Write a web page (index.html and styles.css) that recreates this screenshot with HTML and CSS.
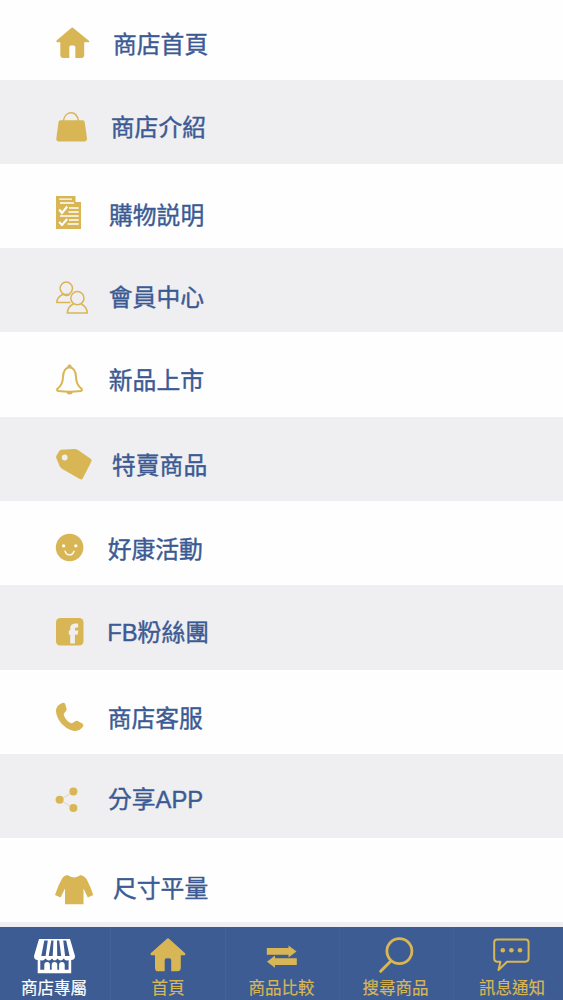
FILE: index.html
```html
<!DOCTYPE html>
<html lang="zh-Hant">
<head>
<meta charset="utf-8">
<title>商店專屬</title>
<link rel="stylesheet" href="styles.css">
</head>
<body>
<div class="app">
<ul class="menu">
<li class="row first"><svg class="icon i-home" viewBox="0 0 40 36"><path d="M18.3 1.5Q17.8 1.5 17 2.2L2.5 14.6Q1.8 15.9 3.1 16.2H6.3V28.5Q6.3 32 9.5 32H15.3V21Q15.3 19.5 16.8 19.5H19.8Q21.3 19.5 21.3 21V32H27.4Q30.2 32 30.2 29V16.2H34.5Q36.3 15.6 34.6 14.4L19.6 2.2Q18.9 1.5 18.3 1.5Z"/></svg><span class="label l-home">商店首頁</span></li>
<li class="row alt"><svg class="icon i-bag" viewBox="0 0 40 36"><path d="M6.4 10.3H28.8Q30.3 10.3 30.7 12L33 28.6Q33.2 31.4 30.5 31.4H4.8Q2 31.4 2.3 28.6L4.5 12Q4.8 10.3 6.4 10.3Z"/><path class="line" d="M9.3 11C11 0.5 22.5 -0.5 24.5 11"/></svg><span class="label l-bag">商店介紹</span></li>
<li class="row"><svg class="icon i-list" viewBox="0 0 40 36"><path d="M2 2H21.5V8H27V35H2Z"/><path class="cut" d="M5.2 5.2H18M6 9H20M15 14H24.7M14.5 18H24.7M6 22H24.7M15 26H24.7M13.5 30H24.7"/><path class="cut bold" d="M5.2 15.5L8 19L13.2 12.5M5.2 28L8 31L13.2 25"/></svg><span class="label l-list">購物説明</span></li>
<li class="row alt"><svg class="icon i-members" viewBox="0 0 40 36"><g class="line"><circle cx="12.3" cy="9.3" r="6.2"/><path d="M16 15.5C14 17 10.5 16.6 9 15.2C4.5 17.3 2.8 20 2.8 23.6H16.5"/><circle class="hole" cx="23.4" cy="19.2" r="6.6"/><path d="M19.4 25C15.5 26.7 13.6 29.7 13.3 34H33.3C33 29.8 31 26.7 27.3 25"/></g></svg><span class="label l-members">會員中心</span></li>
<li class="row"><svg class="icon i-bell" viewBox="0 0 40 36"><path class="line heavy" d="M15.5 4.2C10.6 4.7 9.2 8.8 9 14C8.8 20.5 7.1 23 3.7 25.5Q2 27.5 4.5 28Q15.5 29.4 26.5 28Q29 27.5 27.3 25.5C23.9 23 22.2 20.5 22 14C21.8 8.8 20.4 4.7 15.5 4.2Z"/><path d="M13.3 4.8Q13.2 1.5 15.5 1.5T17.7 4.8ZM12.3 28.5H18.9Q18.7 31.4 15.6 31.4T12.3 28.5Z"/></svg><span class="label l-bell">新品上市</span></li>
<li class="row alt"><svg class="icon i-tag" viewBox="0 0 40 36"><path d="M7.2 2.7L20.8 2Q22.4 2 24 3L36.6 11.7Q38.2 13 37.4 14.5L28.7 31.5Q27.7 33.1 25.8 32L8.3 21.9Q6.4 20.7 5.6 19L2.2 10.8Q1.7 9.5 2.7 8.2L5.1 4.2Q6 2.8 7.2 2.7Z"/><circle class="hole" cx="10.7" cy="10.5" r="2.9"/></svg><span class="label l-tag">特賣商品</span></li>
<li class="row"><svg class="icon i-smile" viewBox="0 0 40 36"><circle cx="15.6" cy="15.5" r="13.8"/><circle class="white" cx="9.6" cy="13.8" r="1.6"/><circle class="white" cx="21.8" cy="13.8" r="1.6"/><path class="cut" d="M10.9 18.7C12.2 24.2 18.6 24.4 20.2 18.7"/></svg><span class="label l-smile">好康活動</span></li>
<li class="row alt"><svg class="icon i-fb" viewBox="0 0 40 36"><rect x="2" y="2" width="27.5" height="27.6" rx="4.2"/><path class="hole" d="M16.2 27.5V18.7H14.8V14.6H16.2V12.5C16.2 9 18.5 7.2 24.2 7.7V11.5H22.2Q20.9 11.5 20.9 13V14.6H24.3L23.7 18.7H20.9V27.5Z"/></svg><span class="label l-fb">FB粉絲團</span></li>
<li class="row"><svg class="icon i-phone" viewBox="0 0 40 36"><path d="M8.2 2.1Q10.2 1.3 11.2 3.1L12.6 8Q13 9.7 10.7 11.6Q9.2 13 10 14.7C11.5 18.3 14.3 21.3 17.4 22.2Q18.5 22.5 19.7 21.2Q21.5 19.2 23.2 19.8L28.3 22.4Q30.1 23.5 29.2 25.3Q25.6 30.8 19.3 29.7C10.5 28 2.6 19 2 10.5Q1.8 4.5 8.2 2.1Z"/></svg><span class="label l-phone">商店客服</span></li>
<li class="row alt"><svg class="icon i-share" viewBox="0 0 40 36"><path class="line faint" d="M19.5 5.8L5.6 14L19.5 22"/><circle cx="19.4" cy="5.6" r="4"/><circle cx="5.6" cy="13.8" r="4"/><circle cx="19.4" cy="21.9" r="4"/></svg><span class="label l-share">分享APP</span></li>
<li class="row"><svg class="icon i-shirt" viewBox="0 0 40 36"><path d="M13.5 2Q20 6.8 26.7 2Q30.5 3 32.4 5.8Q37 14.5 39.3 22L33.8 24.4L29.5 15.5V31.2H11V15.5L6.6 24.4L1 22Q3.8 13 8.2 5.3Q10 2.6 13.5 2Z"/></svg><span class="label l-shirt">尺寸平量</span></li>
</ul>
<nav class="tabs">
<a class="tab active"><svg class="tab-icon" viewBox="0 0 44 38"><path d="M7 2H38L43 19Q43 23 39.2 23V36.3H5.7V23Q2 23 2 19Z"/><path class="blue" d="M12.3 3.5H15.8L13.6 19H9.3ZM19.3 3.5H21.5L20.7 19H16.7ZM25 3.5H27.2L29.2 19H25.2ZM31.2 3.5H34.2L37.6 19H33.1ZM8.3 23Q11.5 24.5 13.4 21.5Q17 25.5 20 21.5Q22.5 25.5 25.5 21.5Q28.5 25.5 31.8 21.5Q33.5 24.5 36.6 23V32.8H8.3Z"/><path d="M12.3 33V28Q12.3 25 15.1 25T17.9 28V33ZM19.7 33V28Q19.7 25 22.5 25T25.3 28V33ZM27.1 33V28Q27.1 25 29.9 25T32.7 28V33Z"/></svg><span class="tab-label">商店專屬</span></a>
<a class="tab"><svg class="tab-icon" viewBox="0 0 44 38"><path d="M22 1.3Q21.4 1.3 20.7 2L4.7 16.3Q3.9 17.7 5.5 18.2H9V30.4Q9 34.3 12 34.3H18.7V23.3Q18.7 21.3 20.7 21.3H23.2Q25.2 21.3 25.2 23.3V34.3H31.5Q34.8 34.3 34.8 30.5V18.2H38.5Q40 17.7 39.1 16.3L23.3 2Q22.6 1.3 22 1.3Z"/></svg><span class="tab-label">首頁</span></a>
<a class="tab compare"><svg class="tab-icon" viewBox="0 0 44 38"><path d="M6.8 11H28.5V8.5L36.5 14.4L28.5 20.4V17.7H6.8ZM36.8 21.3H15V18.6L7 24.7L15 30.7V28H36.8Z"/></svg><span class="tab-label">商品比較</span></a>
<a class="tab search"><svg class="tab-icon" viewBox="0 0 44 38"><g class="line"><circle class="lens" cx="25.4" cy="14.1" r="12.5"/><path class="handle" d="M16.9 24L6.7 34.3"/></g></svg><span class="tab-label">搜尋商品</span></a>
<a class="tab notice"><svg class="tab-icon" viewBox="0 0 44 38"><path class="line heavy" d="M7 2.5H35.5Q38.6 2.5 38.6 5.5V21.6Q38.6 24.7 35.5 24.7H17L8.5 33L10.4 24.7H7Q4.2 24.7 4.2 21.6V5.5Q4.2 2.5 7 2.5Z"/><circle cx="12.8" cy="13.3" r="2.3"/><circle cx="21.4" cy="13.3" r="2.3"/><circle cx="30" cy="13.3" r="2.3"/></svg><span class="tab-label">訊息通知</span></a>
</nav>
</div>
</body>
</html>
```
FILE: styles.css
```css
* { box-sizing: border-box; }
body {
  margin: 0;
  background: #fefefe;
  font-family: "Liberation Sans", "Noto Sans CJK TC", sans-serif;
}
.app {
  display: flex;
  flex-direction: column;
  height: 1000px;
  overflow: hidden;
  background: #efeef0;
}
.menu {
  list-style: none;
  margin: 0;
  padding: 0;
  height: 926.5px;
  flex: none;
}
.row {
  --surface: #fefefe;
  display: flex;
  align-items: flex-start;
  height: 84.3px;
  padding-left: 54px;
  background: var(--surface);
}
.row.first { height: 79.5px; }
.row.alt { --surface: #efeef0; }
.icon {
  width: 40px;
  height: 36px;
  flex: none;
  fill: #d9b655;
  overflow: visible;
}
.line {
  fill: none;
  stroke: #d9b655;
  stroke-width: 1.5;
  stroke-linejoin: round;
}
.line.heavy { stroke-width: 2; }
.line.faint { stroke-width: .7; opacity: .6; }
.hole { fill: var(--surface); }
.white { fill: #fff; }
.cut { fill: none; stroke: #fefefe; stroke-width: 1.3; }
.cut.bold { stroke-width: 2.1; }
.label {
  padding-top: 1px;
  font-size: 23.8px;
  line-height: 24px;
  color: #3c5a93;
  -webkit-text-stroke: .4px #3c5a93;
  white-space: nowrap;
}
.i-home { margin-top: 26px; }
.i-bag { margin-top: 30.5px; }
.i-list { margin-top: 30.2px; }
.i-members { margin-top: 30.9px; }
.i-bell { margin-top: 30.6px; }
.i-tag { margin-top: 30.3px; }
.i-smile { margin-top: 31px; }
.i-fb { margin-top: 30.7px; }
.i-phone { margin-top: 31.4px; }
.i-share { margin-top: 32.1px; }
.i-shirt { margin-top: 34.8px; }
.l-home { margin: 32.2px 0 0 19px; }
.l-bag { margin: 35.2px 0 0 16.8px; }
.l-list { margin: 39.7px 0 0 15px; }
.l-members { margin: 36.9px 0 0 14.8px; }
.l-bell { margin: 35.6px 0 0 14.8px; }
.l-tag { margin: 36.8px 0 0 18px; }
.l-smile { margin: 36px 0 0 13.7px; }
.l-fb { margin: 35.2px 0 0 13.2px; }
.l-phone { margin: 36.9px 0 0 13.7px; }
.l-share { margin: 33.6px 0 0 14px; }
.l-shirt { margin: 37.8px 0 0 19px; }
.tabs {
  display: grid;
  grid-template-columns: 110px 115px 114px 114px 1fr;
  flex: 1;
  background: #3c5c93;
}
.tab {
  display: flex;
  flex-direction: column;
  align-items: center;
  padding-top: 10.5px;
  color: #d9b655;
  border-left: 1px solid #416197;
}
.tab.active { color: #fff; border-left: 0; padding-right: 2px; }
.tab.compare { padding-right: 2px; }
.tab.search { padding-right: 2px; }
.tab.notice { padding-left: 7px; }
.tab-icon {
  width: 44px;
  height: 38px;
  flex: none;
  fill: #d9b655;
  overflow: visible;
}
.active .tab-icon { fill: #fff; }
.tab-icon .blue { fill: #3c5c93; }
.lens { stroke-width: 2.8; }
.handle { stroke-width: 3; stroke-linecap: round; }
.tab-label {
  margin-top: 4px;
  font-size: 16.5px;
  line-height: 18px;
  -webkit-text-stroke: .2px currentColor;
  white-space: nowrap;
}
```
